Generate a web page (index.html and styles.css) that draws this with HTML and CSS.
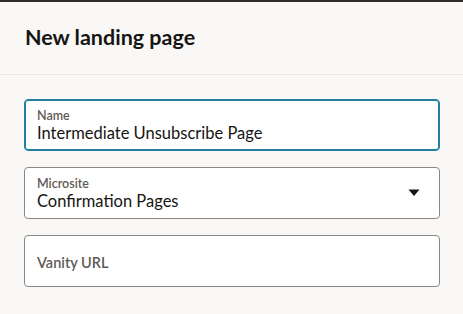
FILE: index.html
```html
<!DOCTYPE html>
<html lang="en">
<head>
  <meta charset="UTF-8">
  <title>New landing page</title>
  <link rel="stylesheet" href="styles.css">
</head>
<body>
  <div class="topbar"></div>
  <div class="dialog-header">
    <h2>New landing page</h2>
  </div>

  <div class="dialog-body">
    <div class="field focused">
      <span class="field-label">Name</span>
      <span class="field-value">Intermediate Unsubscribe Page</span>
    </div>

    <div class="field select">
      <div class="field-text">
        <span class="field-label">Microsite</span>
        <span class="field-value">Confirmation Pages</span>
      </div>
      <svg class="caret" width="12" height="8" viewBox="0 0 12 8">
        <path d="M0.5 0.5 L11.5 0.5 L6 7 Z" fill="#161513"/>
      </svg>
    </div>

    <div class="field empty">
      <span class="field-placeholder">Vanity URL</span>
    </div>
  </div>
</body>
</html>
```

FILE: styles.css
```css
:root {
  --bg-color: #f9f8f6;
  --text-color: #161513;
  --label-color: #615a56;
  --border-color: #8a8784;
  --focus-color: #227e9e;
  --divider: #ebe8e4;
}

body {
  margin: 0;
  background-color: var(--bg-color);
  color: var(--text-color);
  font-family: "Lato", "Noto Sans", sans-serif;
}

.topbar {
  height: 2px;
  background-color: #312d2a;
}

.dialog-header {
  height: 73px;
  box-sizing: border-box;
  display: flex;
  align-items: center;
  padding: 0 25px 2px 25px;
  border-bottom: 1px solid var(--divider);
}

h2 {
  margin: 0;
  font-size: 21.5px;
  font-weight: bold;
}

.dialog-body {
  display: flex;
  flex-direction: column;
  gap: 16px;
  padding: 24px 23px 0 24px;
}

.field {
  height: 52px;
  box-sizing: border-box;
  background: #ffffff;
  border: 1px solid var(--border-color);
  border-radius: 4px;
  padding: 9px 12px 0 12px;
  display: flex;
  flex-direction: column;
}

.field.focused {
  border-color: var(--focus-color);
  box-shadow: inset 0 0 0 1px var(--focus-color);
}

.field-label {
  font-size: 12.5px;
  line-height: 14px;
  font-weight: 600;
  color: var(--label-color);
}

.field-value {
  font-size: 16.5px;
  line-height: 20px;
}

.field.select {
  flex-direction: row;
  align-items: flex-start;
  justify-content: space-between;
  padding-right: 19px;
}

.field-text {
  display: flex;
  flex-direction: column;
}

.caret {
  align-self: center;
  margin-top: -9px;
}

.field.empty {
  justify-content: center;
  padding-top: 2px;
}

.field-placeholder {
  font-size: 14.5px;
  font-weight: 600;
  color: var(--label-color);
}
```
